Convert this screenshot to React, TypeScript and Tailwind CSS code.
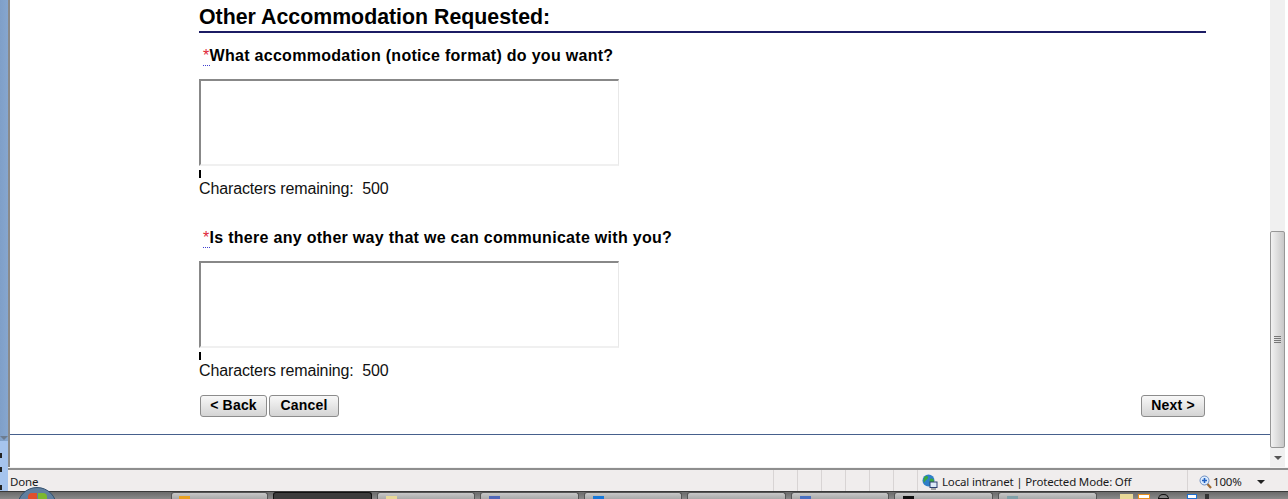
const taskButtons = [
  { width: "w-[97px]", color: "bg-[#e8a020]", dark: false },
  { width: "w-[99px]", color: "", dark: true },
  { width: "w-[98px]", color: "bg-[#e8d898]", dark: false },
  { width: "w-[99px]", color: "bg-[#5068b8]", dark: false },
  { width: "w-[98px]", color: "bg-[#1878d8]", dark: false },
  { width: "w-[99px]", color: "", dark: false },
  { width: "w-[98px]", color: "bg-[#4870c0]", dark: false },
  { width: "w-[99px]", color: "bg-[#101010]", dark: false },
  { width: "w-[99px]", color: "bg-[#80a0a8]", dark: false },
];

function Question({ label }: { label: string }) {
  return (
    <div>
      <div className="flex h-[18px] items-center pl-[4px] text-[16px] font-bold leading-[18px] tracking-[0.29px] text-black">
        <abbr className="border-b border-dotted border-[#4040d0] font-normal text-[#e02838] no-underline" title="required">*</abbr>
        {label}
      </div>
      <textarea className="mt-[14px] block h-[87px] w-[420px] resize-none border-t-2 border-r border-b-2 border-l-2 border-t-[#888888] border-r-[#e8e8e8] border-b-[#f0f0f0] border-l-[#888888] bg-white" />
      <div className="mt-[4px] h-[8px] w-[2px] bg-black" />
      <div className="mt-[2px] h-[18px] text-[16px] leading-[18px] tracking-[-0.13px] text-[#111]">Characters remaining:&nbsp; 500</div>
    </div>
  );
}

function FormButton({ children }: { children: string }) {
  return (
    <button className="h-[22px] rounded-[3px] border border-[#8c8c8c] bg-gradient-to-b from-[#f8f8f8] to-[#d4d4d4] pb-[2px] text-[14px] font-bold leading-none tracking-[0.2px] text-black">
      {children}
    </button>
  );
}

export default function App() {
  return (
    <div className="relative flex h-[499px] w-[1288px] flex-col overflow-hidden bg-white font-['Liberation_Sans',Arial,sans-serif]">
      <div className="flex h-[491px]">
        {/* left edge */}
        <div className="flex w-[8px] flex-col">
          <div className="flex h-[441px] flex-col justify-end bg-gradient-to-r from-[#7f9fc8] to-[#86a6cf] pb-[1px]">
            <div className="h-0 w-0 border-x-[4px] border-t-[4px] border-x-transparent border-t-[#6c7c90]" />
          </div>
          <div className="flex flex-1 flex-col bg-[#a6c4ee] pt-[12px]">
            <div className="h-[5px] w-[2px] bg-[#222]" />
            <div className="mt-[9px] h-[5px] w-[2px] bg-[#222]" />
            <div className="mt-[13px] h-[5px] w-[2px] bg-[#222]" />
          </div>
        </div>

        <div className="flex flex-1 flex-col">
          <div className="flex h-[476px]">
            <div className="w-[2px] bg-[#8a8a8a]" />
            <main className="flex-1 bg-white">
              <div className="flex h-[434px] flex-col border-b-0 pl-[189px] pr-[64px]">
                <h1 className="h-[31px] pt-[4px] text-[21.33px] font-bold leading-[26px] text-black">Other Accommodation Requested:</h1>
                <div className="h-[2px] bg-[#1c1c64]" />
                <div className="mt-[14px] flex flex-col gap-[31px]">
                  <Question label="What accommodation (notice format) do you want?" />
                  <Question label="Is there any other way that we can communicate with you?" />
                </div>
                <div className="mt-[15px] flex justify-between pl-[1px] pr-[1px]">
                  <div className="flex gap-[2px]">
                    <div className="flex w-[67px] flex-col"><FormButton>&lt; Back</FormButton></div>
                    <div className="flex w-[70px] flex-col"><FormButton>Cancel</FormButton></div>
                  </div>
                  <div className="flex w-[64px] flex-col"><FormButton>Next &gt;</FormButton></div>
                </div>
              </div>
              <div className="h-[1px] bg-[#46608c]" />
            </main>

            {/* scrollbar */}
            <div className="flex w-[18px] pr-[3px]">
              <div className="flex w-[15px] flex-col bg-[#f0f0f0]">
                <div className="h-[231px]" />
                <div className="flex h-[217px] items-center justify-center rounded-[2px] border border-[#979797] bg-gradient-to-r from-[#f2f2f2] to-[#c8c8c8]">
                  <div className="flex w-[7px] flex-col gap-[1px]">
                    <div className="h-[1px] bg-[#777]" />
                    <div className="h-[1px] bg-[#777]" />
                    <div className="h-[1px] bg-[#777]" />
                    <div className="h-[1px] bg-[#777]" />
                  </div>
                </div>
                <div className="flex flex-1 items-center justify-center">
                  <div className="h-0 w-0 border-x-[4px] border-t-[4px] border-x-transparent border-t-[#555]" />
                </div>
              </div>
            </div>
          </div>

          {/* status bar */}
          <div className="h-[1px] bg-[#f4f4f4]" />
          <footer className="flex h-[23px] items-stretch border-t-2 border-t-[#8e8e8e] bg-[#f0eded] font-['Noto_Sans',sans-serif] text-[11.5px] tracking-[-0.17px] text-[#1a1a1a]">
            <div className="flex w-[765px] items-center pl-[2px] pt-[2px]">Done</div>
            <div className="w-[24px] border-l border-[#d8d4d4]" />
            <div className="w-[24px] border-l border-[#d8d4d4]" />
            <div className="w-[24px] border-l border-[#d8d4d4]" />
            <div className="w-[24px] border-l border-[#d8d4d4]" />
            <div className="w-[24px] border-l border-[#d8d4d4]" />
            <div className="w-[24px] border-l border-[#d8d4d4]" />
            <div className="flex w-[270px] items-center gap-[4px] border-l border-[#d8d4d4] pl-[4px] pt-[2px]">
              <svg width="16" height="16" viewBox="0 0 16 16">
                <circle cx="6.5" cy="6.5" r="6" fill="#2f7fc8" />
                <path d="M3 2.5c2-1 3.5 0 3 1.5S3.5 6 2.500 8 1 4 3 2.500zM8 5c2-1 4 0 4 2s-2 4-3 3-2-4-1-5z" fill="#3aa83c" />
                <rect x="8" y="8" width="7" height="5.500" fill="#dceaf8" stroke="#2a3f70" />
                <path d="M9 15h5" stroke="#8a8a8a" strokeWidth="1.500" />
              </svg>
              <span>Local intranet | Protected Mode: Off</span>
            </div>
            <div className="flex flex-1 items-center gap-[1px] border-l border-[#d8d4d4] pl-[11px] pt-[2px]">
              <svg width="13" height="14" viewBox="0 0 13 14">
                <path d="M8 8.500l4 4.500" stroke="#a06a30" strokeWidth="2.200" />
                <circle cx="5.500" cy="5.500" r="4.500" fill="#dcecff" stroke="#6f8fc0" />
                <path d="M3 5.500h5M5.500 3v5" stroke="#1f5fc0" strokeWidth="1.600" />
              </svg>
              <span className="w-[29px]">100%</span>
              <div className="ml-[14px] h-0 w-0 border-x-[4px] border-t-[4px] border-x-transparent border-t-[#222]" />
            </div>
          </footer>
        </div>
      </div>

      {/* taskbar */}
      <div className="flex h-[8px] items-start gap-[5px] border-t border-t-[#3a3a3a] bg-gradient-to-b from-[#6a6a6a] to-[#8a8a8a] pl-[171px]">
        {taskButtons.map((b, i) => (
          <div
            key={i}
            className={`flex h-[8px] ${b.width} justify-center rounded-t-[3px] border border-b-0 pl-[2px] pt-[3px] ${b.dark ? "border-[#111] bg-[#3c3c3c]" : "border-[#555] bg-gradient-to-b from-[#c8c8c8] to-[#a4a4a4]"}`}
          >
            <div className={`mr-[72px] h-[6px] w-[11px] ${b.color}`} />
          </div>
        ))}
        <div className="ml-[18px] flex pt-[2px]">
          <div className="h-[5px] w-[13px] bg-[#e8d898]" />
          <div className="ml-[5px] h-[5px] w-[12px] border border-[#e89020] bg-white" />
          <div className="ml-[8px] h-[5px] w-[11px] rounded-t-full border border-[#111]" />
          <div className="ml-[18px] h-[5px] w-[10px] border border-[#2070d0] bg-white" />
          <div className="ml-[8px] h-[5px] w-[4px] bg-[#333]" />
        </div>
      </div>

      {/* start orb sits over the status bar edge */}
      <div className="absolute left-[17px] top-[487px] h-[40px] w-[40px] rounded-full border border-[#33506e] bg-[#5f7f9f]">
        <div className="absolute left-[10px] top-[5px] h-[8px] w-[9px] rounded-tl-[4px] bg-[#e0502c]" />
        <div className="absolute left-[20px] top-[5px] h-[8px] w-[9px] rounded-tr-[4px] bg-[#7cb82f]" />
      </div>
    </div>
  );
}
